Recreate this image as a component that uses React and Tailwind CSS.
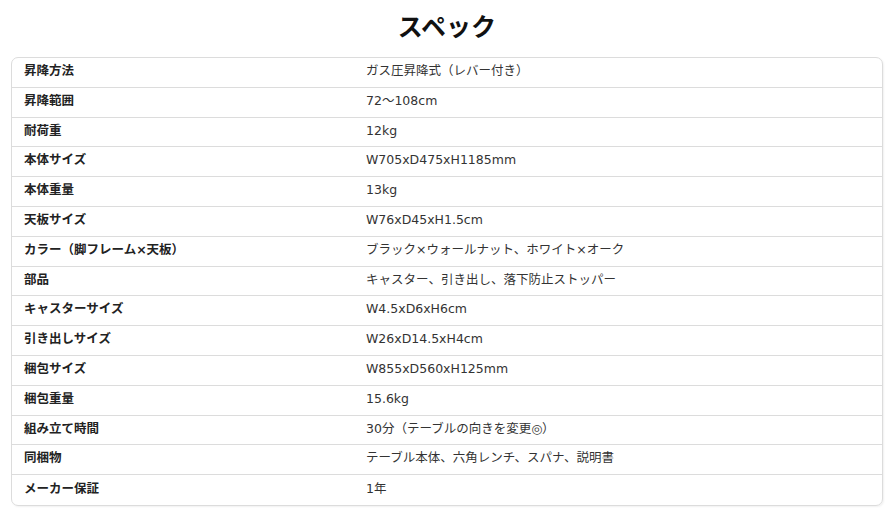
import React from 'react'

const specs = [
  ['昇降方法', 'ガス圧昇降式（レバー付き）'],
  ['昇降範囲', '72～108cm'],
  ['耐荷重', '12kg'],
  ['本体サイズ', 'W705xD475xH1185mm'],
  ['本体重量', '13kg'],
  ['天板サイズ', 'W76xD45xH1.5cm'],
  ['カラー（脚フレーム×天板）', 'ブラック×ウォールナット、ホワイト×オーク'],
  ['部品', 'キャスター、引き出し、落下防止ストッパー'],
  ['キャスターサイズ', 'W4.5xD6xH6cm'],
  ['引き出しサイズ', 'W26xD14.5xH4cm'],
  ['梱包サイズ', 'W855xD560xH125mm'],
  ['梱包重量', '15.6kg'],
  ['組み立て時間', '30分（テーブルの向きを変更◎）'],
  ['同梱物', 'テーブル本体、六角レンチ、スパナ、説明書'],
  ['メーカー保証', '1年'],
]

const App = () => {
  return (
    <div className="w-[894px] h-[513px] bg-white px-[11px] pt-[8px] font-['DejaVu_Sans','Noto_Sans_CJK_JP',sans-serif] text-[#333]">
      <h2 className="text-center text-[25px] font-bold leading-[34px] text-[#111] mb-[15px] font-['Noto_Sans_CJK_JP',sans-serif]">スペック</h2>

      {/* spec table */}
      <div className="w-[872px] border border-[#dcdcdc] rounded-[7px] overflow-hidden shadow-[1px_1px_2px_rgba(0,0,0,0.06)]">
        {specs.map(([k, v], i) => (
          <div
            key={k}
            className={`flex items-center h-[29.8px] pb-[2px] text-[12.5px] ${i < specs.length - 1 ? 'border-b border-[#dcdcdc]' : ''}`}
          >
            <div className="w-[342px] pl-3 font-bold text-[#222]">{k}</div>
            <div className="pl-3">{v}</div>
          </div>
        ))}
      </div>
    </div>
  )
}

export default App
